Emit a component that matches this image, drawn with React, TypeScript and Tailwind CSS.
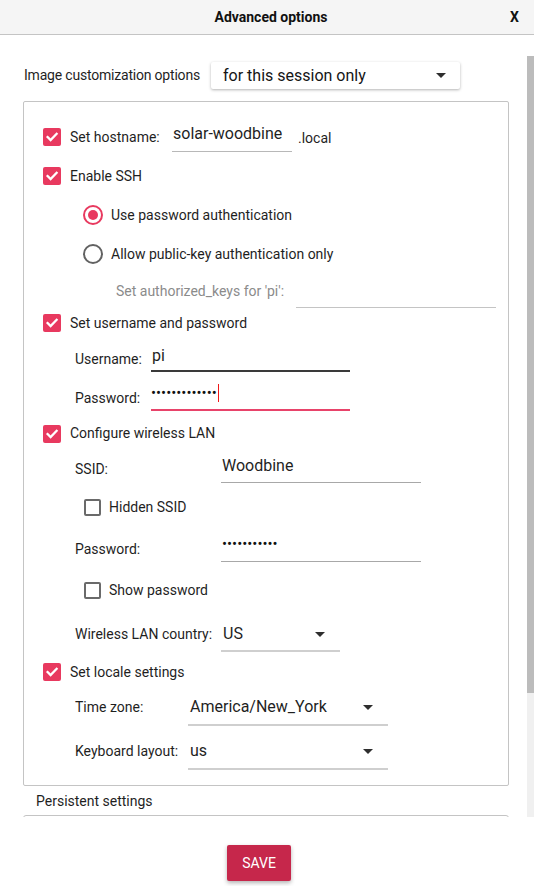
import React from "react";

function Check() {
  return (
    <div className="w-[18px] h-[18px] rounded-[2px] bg-[#e8395f] flex items-center justify-center shrink-0">
      <svg width="14" height="14" viewBox="0 0 14 14">
        <path d="M2.6 7.1 L5.6 10.1 L11.6 3.9" fill="none" stroke="white" strokeWidth="2.3" strokeLinecap="square" />
      </svg>
    </div>
  );
}

function Unchecked() {
  return <div className="w-[17px] h-[17px] rounded-[2px] border-2 border-[#6a6a6a] shrink-0" />;
}

function Arrow() {
  return (
    <svg width="10" height="5" viewBox="0 0 10 5" className="shrink-0">
      <path d="M0 0 H10 L5 5 Z" fill="#2e2e2e" />
    </svg>
  );
}

export default function App() {
  return (
    <div className="w-[534px] h-[886px] bg-white font-['Roboto',sans-serif] text-[#1f1f1f] overflow-hidden">
      {/* header */}
      <div className="h-[35px] bg-[#f5f5f5] border-b border-[#c4c4c4] grid grid-cols-[1fr_auto_1fr] items-center">
        <div />
        <div className="text-[14px] font-bold text-[#111] pl-[8px]">Advanced options</div>
        <div className="flex justify-end pr-[15px] text-[14px] font-bold text-[#111]">X</div>
      </div>

      {/* scroll area */}
      <div className="flex h-[782px]">
        <div className="flex-1 overflow-hidden">
          <div className="pt-[27px] flex items-center pl-[24px]">
            <div className="w-[187px] text-[14px] tracking-[-0.2px]">Image customization options</div>
            <div className="w-[249px] h-[27px] bg-white rounded-[2px] shadow-[0_1px_3px_rgba(0,0,0,0.3)] flex items-center justify-between pl-[12px] pr-[14px]">
              <span className="text-[16px] text-[#151515]">for this session only</span>
              <Arrow />
            </div>
          </div>

          {/* group box */}
          <div className="mt-[12px] ml-[23px] w-[486px] h-[685px] border border-[#c4c4c4] rounded-[2px] pt-[16px] pb-[12px] text-[14px]">
            {/* hostname */}
            <div className="h-[38px] flex items-center pl-[19px]">
              <Check />
              <div className="w-[111px] pl-[9px]">Set hostname:</div>
              <div className="w-[120px] h-[30px] border-b border-[#b8b8b8] pt-[2px] text-[16px] leading-[20px] pl-[1px]">solar-woodbine</div>
              <div className="pl-[6px] pt-[3px] text-[14px]">.local</div>
            </div>
            {/* ssh */}
            <div className="h-[40px] flex items-center pl-[19px]">
              <Check />
              <div className="pl-[9px]">Enable SSH</div>
            </div>
            {/* radio 1 */}
            <div className="h-[38px] flex items-center pl-[59px]">
              <div className="w-[20px] h-[20px] rounded-full border-2 border-[#e8395f] flex items-center justify-center shrink-0">
                <div className="w-[10px] h-[10px] rounded-full bg-[#e8395f]" />
              </div>
              <div className="pl-[8px]">Use password authentication</div>
            </div>
            {/* radio 2 */}
            <div className="h-[40px] flex items-center pl-[59px]">
              <div className="w-[20px] h-[20px] rounded-full border-2 border-[#626262] shrink-0" />
              <div className="pl-[8px]">Allow public-key authentication only</div>
            </div>
            {/* keys */}
            <div className="h-[34px] flex items-center pl-[92px]">
              <div className="w-[180px] text-[#8b8b8b]">Set authorized_keys for 'pi':</div>
              <div className="w-[200px] h-[18px] border-b border-[#c4c4c4] mt-[16px]" />
            </div>
            {/* username check */}
            <div className="h-[30px] flex items-center pl-[19px]">
              <Check />
              <div className="pl-[9px]">Set username and password</div>
            </div>
            {/* username */}
            <div className="h-[42px] flex items-center pl-[51px]">
              <div className="w-[76px]">Username:</div>
              <div className="w-[199px] h-[26px] border-b-2 border-[#3a3a3a] text-[16px] leading-[20px] pl-[1px]">pi</div>
            </div>
            {/* password */}
            <div className="h-[36px] flex items-center pl-[51px]">
              <div className="w-[76px]">Password:</div>
              <div className="w-[199px] h-[26px] border-b-2 border-[#e8436a] flex flex-col">
                <div className="flex items-center h-[18px] -mt-[1px]">
                  <span className="text-[15px] leading-none text-[#111]">•••••••••••••</span>
                  <span className="w-px h-[18px] bg-[#f01818] ml-[1px]" />
                </div>
              </div>
            </div>
            {/* wireless */}
            <div className="h-[35px] flex items-center pl-[19px]">
              <Check />
              <div className="pl-[9px]">Configure wireless LAN</div>
            </div>
            {/* SSID */}
            <div className="h-[36px] flex items-center pl-[51px]">
              <div className="w-[146px]">SSID:</div>
              <div className="w-[200px] h-[28px] border-b border-[#a8a8a8] pt-[1px] text-[16px] leading-[20px] pl-[1px]">Woodbine</div>
            </div>
            {/* hidden */}
            <div className="h-[40px] flex items-center pl-[60px]">
              <Unchecked />
              <div className="pl-[8px]">Hidden SSID</div>
            </div>
            {/* wifi password */}
            <div className="h-[44px] flex items-center pl-[51px]">
              <div className="w-[146px]">Password:</div>
              <div className="w-[200px] h-[26px] border-b border-[#a8a8a8] flex flex-col">
                <div className="flex items-center h-[16px] pl-[1px]">
                  <span className="text-[15px] leading-none text-[#111]">•••••••••••</span>
                </div>
              </div>
            </div>
            {/* show password */}
            <div className="h-[38px] flex items-center pl-[60px]">
              <Unchecked />
              <div className="pl-[8px]">Show password</div>
            </div>
            {/* country */}
            <div className="h-[50px] flex items-center pl-[51px]">
              <div className="w-[146px]">Wireless LAN country:</div>
              <div className="w-[119px] h-[36px] border-b-2 border-[#cfcfcf] flex items-center justify-between pl-[2px] pr-[15px] pt-[2px]">
                <span className="text-[16px] leading-[20px]">US</span>
                <Arrow />
              </div>
            </div>
            {/* locale */}
            <div className="h-[26px] flex items-center pl-[19px]">
              <Check />
              <div className="pl-[9px]">Set locale settings</div>
            </div>
            {/* time zone */}
            <div className="h-[44px] flex items-center pl-[51px]">
              <div className="w-[113px]">Time zone:</div>
              <div className="w-[200px] h-[38px] border-b-2 border-[#cfcfcf] flex items-center justify-between pl-[2px] pr-[15px] pt-[2px]">
                <span className="text-[16px] leading-[20px]">America/New_York</span>
                <Arrow />
              </div>
            </div>
            {/* keyboard */}
            <div className="h-[44px] flex items-center pl-[51px]">
              <div className="w-[113px]">Keyboard layout:</div>
              <div className="w-[200px] h-[38px] border-b-2 border-[#cfcfcf] flex items-center justify-between pl-[2px] pr-[15px] pt-[2px]">
                <span className="text-[16px] leading-[20px]">us</span>
                <Arrow />
              </div>
            </div>
          </div>

          <div className="mt-[5px] pl-[36px] text-[14px] leading-[20px]">Persistent settings</div>
          <div className="mt-[4px] ml-[23px] w-[486px] h-[200px] border border-[#c4c4c4] rounded-[3px]" />
        </div>

        {/* scrollbar */}
        <div className="w-[7px] pt-[21px] flex flex-col">
          <div className="h-[637px] bg-[#bcbcbc]" />
          <div className="flex-1 bg-[#f0f0f0]" />
        </div>
      </div>

      {/* footer */}
      <div className="pt-[28px] flex justify-center pr-[16px]">
        <div className="w-[64px] h-[36px] bg-[#c6274b] rounded-[2px] shadow-[0_2px_4px_rgba(0,0,0,0.3)] flex items-center justify-center text-white text-[14px]">
          SAVE
        </div>
      </div>
    </div>
  );
}
